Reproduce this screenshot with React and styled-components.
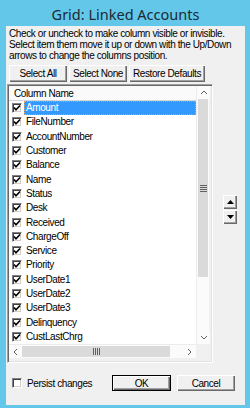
import React from 'react';
import styled, { createGlobalStyle } from 'styled-components';

const GlobalStyle = createGlobalStyle`
    html, body {
        margin: 0;
        padding: 0;
        background: #62c7e8;
    }
    * {
        box-sizing: border-box;
    }
`;

// window frame
const Window = styled.div`
    width: 250px;
    height: 408px;
    display: flex;
    flex-direction: column;
    background: #62c7e8;
    padding: 0 5px 3px 6px;
    font-family: "Liberation Sans", Arial, sans-serif;
    font-size: 10px;
    letter-spacing: -0.4px;
    color: #000;
    overflow: hidden;
`;

const TitleBar = styled.div`
    height: 26px;
    flex: none;
    display: flex;
    align-items: center;
    justify-content: center;
    font-family: "Noto Sans", "Open Sans", sans-serif;
    font-size: 14.5px;
    letter-spacing: 0;
    color: #1b2a33;
    padding-top: 1px;
`;

const Client = styled.div`
    flex: 1;
    background: #f0f0f0;
    display: flex;
    flex-direction: column;
    padding: 2px 0 0 1px;
`;

const Hint = styled.p`
    margin: 0;
    padding-left: 2px;
    line-height: 11px;
    white-space: nowrap;
`;

const ButtonRow = styled.div`
    display: flex;
    gap: 2px;
    margin: 4px 0 2px 2px;
`;

const Button = styled.button`
    height: ${p => p.$h || 17}px;
    width: ${p => p.$w}px;
    margin-left: ${p => p.$ml || 0}px;
    padding: 0;
    font: inherit;
    letter-spacing: inherit;
    white-space: nowrap;
    color: #000;
    background: #f0f0f0;
    border: none;
    display: flex;
    align-items: center;
    justify-content: center;
    box-shadow: ${p => p.$default
        ? 'inset 0 0 0 1px #000, inset 1px 1px 0 1px #fff, inset -1px -1px 0 1px #696969, inset -2px -2px 0 1px #a0a0a0'
        : 'inset 1px 1px 0 #fff, inset -1px -1px 0 #696969, inset -2px -2px 0 #a0a0a0'};
`;

// list view
const Middle = styled.div`
    display: flex;
`;

const ListBox = styled.div`
    width: 206px;
    height: 279px;
    border-style: solid;
    border-width: 1px;
    border-color: #a0a0a0 #fff #fff #a0a0a0;
    box-shadow: inset 1px 1px 0 #696969, inset -1px -1px 0 #e3e3e3;
    padding: 1px 2px 4px 1px;
    display: grid;
    grid-template-columns: 187px 13px;
    grid-template-rows: 1fr 14px;
    background: #f0f0f0;
`;

const Rows = styled.div`
    background: #fff;
    overflow: hidden;
`;

const Header = styled.div`
    height: 15px;
    display: flex;
    align-items: center;
    padding-left: 5px;
    background: #fafafa;
    border-bottom: 1px solid #d5d5d5;
`;

const Row = styled.div`
    height: 14.3px;
    display: flex;
    align-items: center;
    padding-left: 3px;
`;

const Check = styled.span`
    width: 10px;
    height: 10px;
    flex: none;
    background: #fff;
    border-style: solid;
    border-width: 1px;
    border-color: #808080 #fff #fff #808080;
    box-shadow: inset 1px 1px 0 #404040, inset -1px -1px 0 #d4d0c8;
    display: flex;
    align-items: center;
    justify-content: center;
`;

const Label = styled.span`
    margin-left: 2px;
    flex: 1;
    height: 14px;
    line-height: 14px;
    padding-left: 2px;
    white-space: nowrap;
    background: ${p => (p.$selected ? '#3399ff' : 'transparent')};
    color: ${p => (p.$selected ? '#fff' : '#000')};
    outline: ${p => (p.$selected ? '1px dotted #e0a060' : 'none')};
    outline-offset: -1px;
`;

const VScroll = styled.div`
    display: flex;
    flex-direction: column;
    background: #fbfbfb;
    border-left: 1px solid #ececec;
`;

const HScroll = styled.div`
    display: flex;
    background: #fbfbfb;
    border-top: 1px solid #ececec;
`;

const ArrowCell = styled.div`
    width: 13px;
    height: 13px;
    flex: none;
    display: flex;
    align-items: center;
    justify-content: center;
    background: #fbfbfb;
`;

const Thumb = styled.div`
    background: #dadada;
    display: flex;
    align-items: center;
    justify-content: center;
    ${p => (p.$vertical ? 'height: 178px; margin: 0 1px;' : 'width: 148px; margin: 1px 0;')}
`;

const Track = styled.div`
    flex: 1;
`;

const Corner = styled.div`
    background: #f0f0f0;
`;

const MoveButtons = styled.div`
    display: flex;
    flex-direction: column;
    gap: 1px;
    margin: 111px 0 0 10px;
`;

const Footer = styled.div`
    display: flex;
    align-items: center;
    margin-top: 12px;
`;

const Persist = styled.label`
    display: flex;
    align-items: center;
    gap: 5px;
    margin-left: 5px;
    width: 100px;
    white-space: nowrap;
`;

const columns = [
    'Amount', 'FileNumber', 'AccountNumber', 'Customer', 'Balance', 'Name', 'Status',
    'Desk', 'Received', 'ChargeOff', 'Service', 'Priority', 'UserDate1', 'UserDate2',
    'UserDate3', 'Delinquency', 'CustLastChrg',
];

const Tick = () => (
    <svg width="8" height="8" viewBox="0 0 8 8">
        <path d="M1 3.5 L3 5.8 L7 1.5" fill="none" stroke="#000" strokeWidth="1.6" />
    </svg>
);

const Chevron = ({ dir }) => {
    const paths = {
        up: 'M1 5 L4 2 L7 5',
        down: 'M1 2 L4 5 L7 2',
        left: 'M5 1 L2 4 L5 7',
        right: 'M2 1 L5 4 L2 7',
    };
    return (
        <svg width="8" height="8" viewBox="0 0 8 8">
            <path d={paths[dir]} fill="none" stroke="#606060" strokeWidth="1" />
        </svg>
    );
};

const Triangle = ({ up }) => (
    <svg width="7" height="4" viewBox="0 0 7 4">
        <path d={up ? 'M0 4 L3.5 0 L7 4 Z' : 'M0 0 L7 0 L3.5 4 Z'} fill="#000" />
    </svg>
);

const GripV = () => (
    <svg width="7" height="7" viewBox="0 0 7 7">
        <path d="M0 0.5 H7 M0 2.5 H7 M0 4.5 H7 M0 6.5 H7" stroke="#606060" strokeWidth="1" />
    </svg>
);

const GripH = () => (
    <svg width="7" height="7" viewBox="0 0 7 7">
        <path d="M0.5 0 V7 M2.5 0 V7 M4.5 0 V7 M6.5 0 V7" stroke="#606060" strokeWidth="1" />
    </svg>
);

export default function App() {
    return (
        <>
            <GlobalStyle />
            <Window>
                <TitleBar>Grid: Linked Accounts</TitleBar>
                <Client>
                    <Hint>
                        Check or uncheck to make column visible or invisible.<br />
                        Select item them move it up or down with the Up/Down<br />
                        arrows to change the columns position.
                    </Hint>
                    <ButtonRow>
                        <Button $w={58}>Select All</Button>
                        <Button $w={58}>Select None</Button>
                        <Button $w={76}>Restore Defaults</Button>
                    </ButtonRow>
                    <Middle>
                        <ListBox>
                            <Rows>
                                <Header>Column Name</Header>
                                {columns.map((c, i) => (
                                    <Row key={c}>
                                        <Check><Tick /></Check>
                                        <Label $selected={i === 0}>{c}</Label>
                                    </Row>
                                ))}
                                {/* next row, scrolled out of view */}
                                <Row>
                                    <Check><Tick /></Check>
                                </Row>
                            </Rows>
                            <VScroll>
                                <ArrowCell><Chevron dir="up" /></ArrowCell>
                                <Thumb $vertical><GripV /></Thumb>
                                <Track />
                                <ArrowCell><Chevron dir="down" /></ArrowCell>
                            </VScroll>
                            <HScroll>
                                <ArrowCell><Chevron dir="left" /></ArrowCell>
                                <Thumb><GripH /></Thumb>
                                <Track />
                                <ArrowCell><Chevron dir="right" /></ArrowCell>
                            </HScroll>
                            <Corner />
                        </ListBox>
                        <MoveButtons>
                            <Button $w={14} $h={14}><Triangle up /></Button>
                            <Button $w={14} $h={14}><Triangle /></Button>
                        </MoveButtons>
                    </Middle>
                    <Footer>
                        <Persist>
                            <Check />
                            Persist changes
                        </Persist>
                        <Button $w={59} $h={16} $default>OK</Button>
                        <Button $w={58} $h={16} $ml={6}>Cancel</Button>
                    </Footer>
                </Client>
            </Window>
        </>
    );
}
